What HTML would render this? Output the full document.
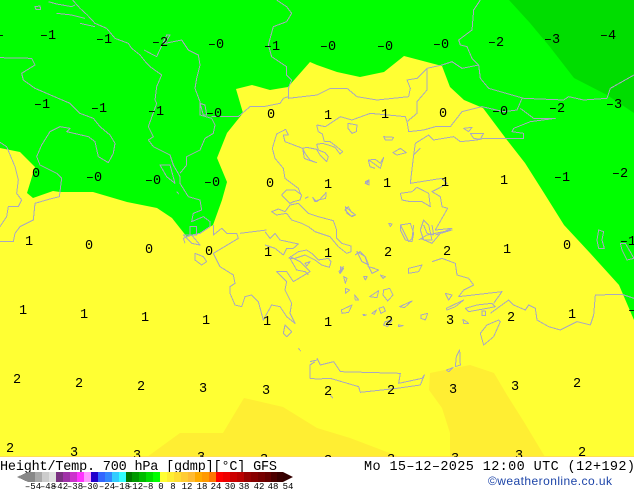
<!DOCTYPE html>
<html>
<head>
<meta charset="utf-8">
<title>Height/Temp. 700 hPa</title>
<style>
html,body{margin:0;padding:0;background:#fff;width:634px;height:490px;overflow:hidden}
svg{display:block}
.c{fill:none;stroke:#a8a8c0;stroke-width:3;stroke-linejoin:round;shape-rendering:crispEdges}
text{font-family:"Liberation Mono",monospace;fill:#000}
.l text{font-size:13.5px;text-anchor:middle}
.b text{font-size:9px;text-anchor:middle}
</style>
</head>
<body>
<svg width="634" height="490" viewBox="0 0 634 490" xmlns="http://www.w3.org/2000/svg">
<defs><clipPath id="m"><rect x="0" y="0" width="634" height="457"/></clipPath></defs>
<g clip-path="url(#m)">
<rect x="0" y="0" width="634" height="457" fill="#00ff00"/>
<polygon fill="#00dd00" points="509,0 530,23 550,47 574,78 607,95 634,113 634,0"/>
<polygon fill="#ffff33" points="0,148 20,152 35,167 27,193 33,198 53,191 60,192 93,192 127,202 157,208 172,218 187,237 200,233 213,225 222,200 227,182 217,158 227,133 243,113 236,89 252,85 270,90 288,87 310,62 317,65 337,72 360,77 384,72 404,56 442,66 450,87 464,100 483,108 507,140 525,163 544,193 564,225 590,253 619,285 634,320 634,457 0,457"/>
<polygon fill="#ffee33" points="147,457 180,433 223,433 244,398 283,407 317,428 350,438 400,457"/>
<polygon fill="#ffee33" points="430,373 470,365 494,373 507,395 524,422 545,457 450,457 450,433 442,408 429,390"/>
<rect x="0" y="456" width="634" height="1" fill="#ffdd55"/>

<g transform="scale(.33333)" class="c">
<path d="M218,0L240,25L262,45L285,70L320,85L345,115L385,130L395,145L420,165L440,190L450,200L485,225L470,260L465,300L470,310L445,380L460,410L445,420L460,440L510,465L520,495L540,530L540,550L565,590L600,600L605,630L580,640L575,665L610,650L630,665L630,680L600,700L575,705L550,715L555,730"/>
<path d="M432,150L470,170L500,105L510,105L495,130L545,120L565,150L595,165L600,195L590,235L585,265L600,305L600,345L635,355L645,375L640,400L615,415L600,450L560,470L560,495L540,520"/>
<path d="M0,173L95,175L105,195L65,220L70,240L105,265L175,295L210,310L240,340L280,355L300,380L330,405L345,430L340,460L325,488L295,470L285,425L265,410L200,395L210,385L180,380L150,395L125,435L110,470L120,495L170,520L185,535L178,590L150,597L105,610L100,660L60,680L45,700L40,725L0,725"/>
<path d="M0,427L20,440L45,500L55,540L50,580L65,600L55,620L25,620L20,650L0,680"/>
<path d="M830,0L860,20L875,40L860,65L820,80L805,135L815,170L860,200L860,225L875,240L865,265L865,295L951,285"/>
<path d="M635,350L715,350L750,320L790,320L840,310L850,295L865,290"/>
<path d="M600,310L610,345L620,345L615,315Z"/>
<path d="M145,5L170,12L215,20L225,15M170,40L215,45L255,55M240,70L285,80M105,20L120,18L122,28L108,28Z"/>
<path d="M480,495L510,495L525,550L500,530Z M530,575L537,583"/>
</g>

<g transform="translate(265,110) scale(.33333)" class="c">
<path d="M178,95L195,95L215,110L233,125L225,132L210,112L190,105L172,100L155,103L160,120L180,128L190,140L185,155L165,135L155,118L125,112L113,115L60,95L55,75L70,75L62,58L35,72L22,115L30,145L55,175L60,205L100,235L108,255"/>
<path d="M155,45L160,65L172,72L178,95"/>
<path d="M113,115L118,145L130,150L155,158L135,150L120,130L113,115"/>
<path d="M310,150L330,148M310,150L315,170L330,175M300,220L312,210L312,225Z"/>
</g>
<g transform="translate(265,190) scale(.33333)" class="c">
<path d="M50,15L65,0L90,0L110,15L105,30L85,35L75,40L60,25Z"/>
<path d="M120,25L130,20M143,22L155,35L165,28L183,8L182,25L160,30L150,35Z"/>
<path d="M20,65L40,57L60,65L75,45L100,40L130,70L160,80L205,92L215,120L215,145L230,160L258,168L258,185L245,190L220,170L195,140L150,125L130,110L110,100L80,90L65,70L35,75Z"/>
<path d="M0,125L15,145L30,130L45,150L100,162L85,175L65,175L55,195L30,175L0,165"/>
<path d="M70,205L100,185L125,180L140,190L160,210L190,205L198,215L193,232L170,225L150,210L120,195L90,205L75,205L95,240L120,245L130,255"/>
<path d="M120,220L135,215L125,228Z M222,245L235,230L225,250Z M240,60L250,50L258,65L272,75L258,78Z M270,195L285,185L300,200L310,230L330,235"/>
</g>

<g transform="translate(317,0) scale(.33333)" class="c">
<path d="M0,285L40,265L90,265L120,290L180,300L275,290L280,265L270,240L300,235L330,205L375,195L405,185L435,205L485,195L490,235L515,265L620,295L740,300L755,290L800,300L870,295L880,265L951,225"/>
<path d="M490,0L470,30L465,90L425,120L430,135L450,140L465,175L485,195"/>
<path d="M330,205L330,270L300,305L300,340L270,365L275,395L320,390L355,380L400,380L435,335L495,320L560,335L600,330L615,295"/>
<path d="M610,325L650,355L715,355L640,365L590,385L585,395L620,400L620,415L575,415L500,415L480,420L430,425L410,410L350,420L335,405L295,430L290,465L310,445"/>
<path d="M0,375L25,380L70,350L105,360L160,340L265,350L270,365"/>
<path d="M93,370L120,375L118,395L105,400L93,385Z M200,410L230,412L225,420L205,420Z M440,385L465,382L455,395Z M460,400L500,400L490,418L470,415Z M228,458L250,445L268,458L240,465Z"/>
<path d="M290,465L280,550L375,535L390,550L365,565L345,575L370,590L375,620L392,625L355,690L405,685L370,700L345,730L310,715"/>
<path d="M250,580L285,575L300,562L335,580L340,620L315,605L280,605L255,600Z M320,660L335,675L345,720L320,720L310,690Z M155,480L175,478L190,490L200,472L190,505L170,490Z M85,620L115,645L105,650L90,640Z M250,675L280,670L290,700L285,725L265,720L250,690Z M145,545L155,540L150,552Z M215,670L225,672L220,680Z"/>
</g>

<g transform="translate(0,225) scale(.33333)" class="c">
<path d="M640,0L640,30L665,10L680,25L710,25L715,40L690,55L640,85L660,125L700,150L705,175L690,185L690,205L705,240L725,245L735,215L755,210L775,230L790,285L815,240L840,245L860,275L885,295L870,265L875,235L855,195L860,170L830,140L860,140L880,170L930,140L915,125L900,110L870,95"/>
<path d="M720,25L800,15"/>
<path d="M585,85L610,95L620,110L605,120L585,105Z M855,300L875,320L860,335L850,325Z M895,370L902,378"/>
<path d="M930,410L951,405M951,462L930,460L930,420L945,410"/>
<path d="M550,30L575,30L600,60L575,55Z M570,5L590,5L590,30L570,30Z"/>
</g>

<g transform="translate(317,225) scale(.33333)" class="c">
<path d="M120,80L145,95L155,120L135,110Z M155,125L185,135L165,145Z M70,125L80,130L70,145Z M80,155L90,160L85,175Z M140,155L150,155L145,165Z M190,150L205,155L198,160Z M275,130L315,120L305,140L275,145Z M85,190L98,195L85,205Z M113,210L125,225L115,225Z M158,215L185,197L180,218Z M200,195L218,190L228,210L212,228L198,210Z M248,245L285,228L262,248Z M73,255L105,240L95,262L75,265Z M138,268L148,270L140,272Z M165,265L178,255L172,268Z M186,250L200,245L205,258L192,265Z M205,290L225,285L212,305L200,300Z M245,300L258,302L245,305Z M312,270L332,265L325,285L312,280Z M438,283L455,295L440,295Z"/>
<path d="M345,110L375,100L415,115L420,150L455,160L470,180L440,195L425,215L555,200L530,235"/>
<path d="M385,205L405,210L395,225Z M388,250L440,225L415,245L390,255Z M445,250L480,240L525,235L535,245L510,250L455,260Z M495,258L505,258L505,272L495,272Z"/>
<path d="M520,265L575,225L590,240L625,255L635,240L655,250L660,285L695,305L730,315L780,290L820,300L830,270L835,210L915,208L951,220"/>
<path d="M545,285L550,290L530,335L500,360L490,325L510,300Z"/>
<path d="M0,400L10,420L50,410L70,440L250,445L245,475L315,460L322,450L310,480L240,490L130,502L125,485L40,460L0,462"/>
<path d="M428,375L430,420L415,425L418,395Z M388,435L408,428L395,440Z M40,510L48,520"/>
<path d="M845,15L860,20L855,45L862,70L845,70L840,45Z M910,55L925,55L951,100L930,105L915,75Z"/>
<path d="M250,0L260,20L275,50L285,40L290,0M320,0L330,25L350,30M305,45L330,30L405,15L355,30M345,0L350,30"/>
</g>

<g class="l">
<text x="0" y="39">–</text><text x="48" y="39">–1</text><text x="104" y="43">–1</text><text x="160" y="46">–2</text><text x="216" y="48">–0</text><text x="272" y="50">–1</text><text x="328" y="50">–0</text><text x="385" y="50">–0</text><text x="441" y="48">–0</text><text x="496" y="46">–2</text><text x="552" y="43">–3</text><text x="608" y="39">–4</text>
<text x="42" y="108">–1</text><text x="99" y="112">–1</text><text x="156" y="115">–1</text><text x="214" y="117">–0</text><text x="271" y="118">0</text><text x="328" y="119">1</text><text x="385" y="118">1</text><text x="443" y="117">0</text><text x="500" y="115">–0</text><text x="557" y="112">–2</text><text x="614" y="108">–3</text>
<text x="36" y="177">0</text><text x="94" y="181">–0</text><text x="153" y="184">–0</text><text x="212" y="186">–0</text><text x="270" y="187">0</text><text x="328" y="188">1</text><text x="387" y="187">1</text><text x="445" y="186">1</text><text x="504" y="184">1</text><text x="562" y="181">–1</text><text x="620" y="177">–2</text>
<text x="29" y="245">1</text><text x="89" y="249">0</text><text x="149" y="253">0</text><text x="209" y="255">0</text><text x="268" y="256">1</text><text x="328" y="257">1</text><text x="388" y="256">2</text><text x="447" y="255">2</text><text x="507" y="253">1</text><text x="567" y="249">0</text><text x="628" y="245">–1</text>
<text x="23" y="314">1</text><text x="84" y="318">1</text><text x="145" y="321">1</text><text x="206" y="324">1</text><text x="267" y="325">1</text><text x="328" y="326">1</text><text x="389" y="325">2</text><text x="450" y="324">3</text><text x="511" y="321">2</text><text x="572" y="318">1</text><text x="632" y="314">–</text>
<text x="17" y="383">2</text><text x="79" y="387">2</text><text x="141" y="390">2</text><text x="203" y="392">3</text><text x="266" y="394">3</text><text x="328" y="395">2</text><text x="391" y="394">2</text><text x="453" y="393">3</text><text x="515" y="390">3</text><text x="577" y="387">2</text>
<text x="10" y="452">2</text><text x="74" y="456">3</text><text x="137" y="459">3</text><text x="201" y="461">3</text><text x="264" y="463">3</text><text x="328" y="464">3</text><text x="391" y="463">3</text><text x="455" y="462">3</text><text x="519" y="459">3</text><text x="582" y="456">2</text>
</g>
</g>

<text x="0" y="470" font-size="13.5" textLength="277" lengthAdjust="spacing">Height/Temp. 700 hPa [gdmp][°C] GFS</text>
<text x="364" y="470" font-size="13.5" textLength="271" lengthAdjust="spacing">Mo 15–12–2025 12:00 UTC (12+192)</text>
<text x="488" y="485" font-size="12" textLength="124" lengthAdjust="spacing" style="font-family:'Liberation Sans',sans-serif;fill:#1c44a8">©weatheronline.co.uk</text>

<g shape-rendering="crispEdges">
<polygon points="17,477 28,472 28,482" fill="#888888"/>
<polygon points="283,472 293,477 283,482" fill="#330000"/>
<rect x="28" y="472" width="7" height="10" fill="#888888"/>
<rect x="35" y="472" width="7" height="10" fill="#aaaaaa"/>
<rect x="42" y="472" width="7" height="10" fill="#cccccc"/>
<rect x="49" y="472" width="7" height="10" fill="#e0e0e0"/>
<rect x="56" y="472" width="7" height="10" fill="#7a3080"/>
<rect x="63" y="472" width="7" height="10" fill="#a030a8"/>
<rect x="70" y="472" width="7" height="10" fill="#cc33cc"/>
<rect x="77" y="472" width="7" height="10" fill="#ff33ff"/>
<rect x="84" y="472" width="7" height="10" fill="#ff99ff"/>
<rect x="91" y="472" width="7" height="10" fill="#2200cc"/>
<rect x="98" y="472" width="7" height="10" fill="#3366ff"/>
<rect x="105" y="472" width="7" height="10" fill="#3388ff"/>
<rect x="112" y="472" width="7" height="10" fill="#33ccff"/>
<rect x="119" y="472" width="7" height="10" fill="#33ffff"/>
<rect x="126" y="472" width="7" height="10" fill="#007700"/>
<rect x="132" y="472" width="7" height="10" fill="#009900"/>
<rect x="139" y="472" width="7" height="10" fill="#00bb00"/>
<rect x="146" y="472" width="7" height="10" fill="#00dd00"/>
<rect x="153" y="472" width="7" height="10" fill="#00ff00"/>
<rect x="160" y="472" width="7" height="10" fill="#ffff33"/>
<rect x="167" y="472" width="7" height="10" fill="#ffee33"/>
<rect x="174" y="472" width="7" height="10" fill="#ffdd33"/>
<rect x="181" y="472" width="7" height="10" fill="#ffcc33"/>
<rect x="188" y="472" width="7" height="10" fill="#ffbb33"/>
<rect x="195" y="472" width="7" height="10" fill="#ffaa00"/>
<rect x="202" y="472" width="7" height="10" fill="#ff9900"/>
<rect x="209" y="472" width="7" height="10" fill="#ff7700"/>
<rect x="216" y="472" width="7" height="10" fill="#ff0000"/>
<rect x="223" y="472" width="7" height="10" fill="#ee0000"/>
<rect x="230" y="472" width="7" height="10" fill="#cc0000"/>
<rect x="237" y="472" width="7" height="10" fill="#bb0000"/>
<rect x="244" y="472" width="7" height="10" fill="#990000"/>
<rect x="251" y="472" width="7" height="10" fill="#880000"/>
<rect x="258" y="472" width="7" height="10" fill="#770000"/>
<rect x="265" y="472" width="6" height="10" fill="#660000"/>
<rect x="271" y="472" width="6" height="10" fill="#4d0000"/>
<rect x="277" y="472" width="6" height="10" fill="#3a0000"/>
</g>
<g class="b">
<text x="33" y="489">–54</text><text x="48" y="489">–48</text><text x="60" y="489">–42</text><text x="75" y="489">–38</text><text x="90" y="489">–30</text><text x="107" y="489">–24</text><text x="122" y="489">–18</text><text x="135" y="489">–12</text><text x="148" y="489">–8</text><text x="161" y="489">0</text><text x="173" y="489">8</text><text x="187" y="489">12</text><text x="202" y="489">18</text><text x="216" y="489">24</text><text x="230" y="489">30</text><text x="244" y="489">38</text><text x="259" y="489">42</text><text x="273" y="489">48</text><text x="288" y="489">54</text>
</g>
</svg>
</body>
</html>
